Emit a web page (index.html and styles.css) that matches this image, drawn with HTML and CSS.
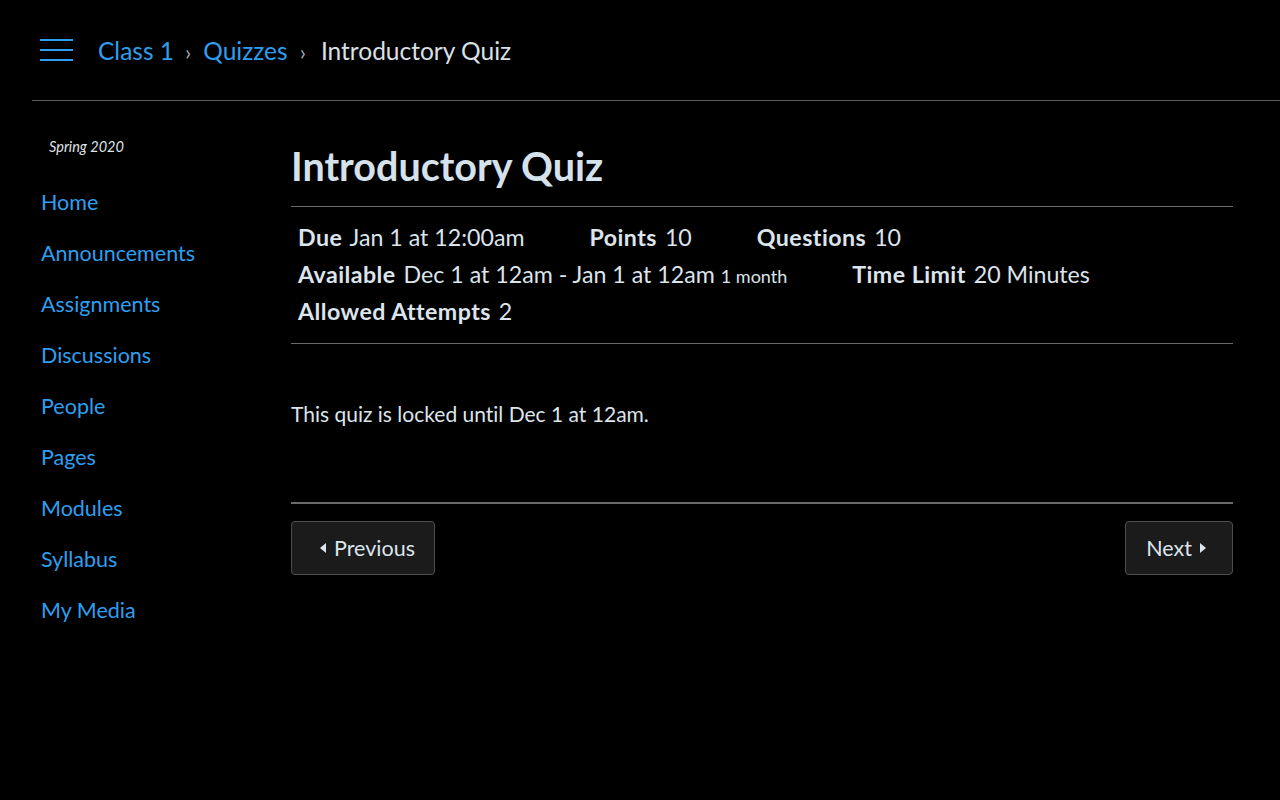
FILE: index.html
```html
<!DOCTYPE html>
<html lang="en">
<head>
<meta charset="utf-8">
<title>Introductory Quiz</title>
<link rel="stylesheet" href="styles.css">
</head>
<body>
<header class="topbar">
  <button class="hamburger" aria-label="Menu">
    <span></span><span></span><span></span>
  </button>
  <nav class="crumbs">
    <a href="#">Class 1</a>
    <span class="sep">&rsaquo;</span>
    <a href="#">Quizzes</a>
    <span class="sep sep-last">&rsaquo;</span>
    <span class="current">Introductory Quiz</span>
  </nav>
</header>
<div class="layout">
  <aside class="sidebar">
    <div class="term">Spring 2020</div>
    <ul class="nav">
      <li><a href="#">Home</a></li>
      <li><a href="#">Announcements</a></li>
      <li><a href="#">Assignments</a></li>
      <li><a href="#">Discussions</a></li>
      <li><a href="#">People</a></li>
      <li><a href="#">Pages</a></li>
      <li><a href="#">Modules</a></li>
      <li><a href="#">Syllabus</a></li>
      <li><a href="#">My Media</a></li>
    </ul>
  </aside>
  <main class="content">
    <h1 class="title">Introductory Quiz</h1>
    <div class="details">
      <div class="row">
        <div class="item"><b>Due</b> Jan 1 at 12:00am</div>
        <div class="item"><b>Points</b> 10</div>
        <div class="item"><b>Questions</b> 10</div>
      </div>
      <div class="row">
        <div class="item"><b>Available</b> Dec 1 at 12am - Jan 1 at 12am <small>1 month</small></div>
        <div class="item"><b>Time Limit</b> 20 Minutes</div>
      </div>
      <div class="row">
        <div class="item"><b>Allowed Attempts</b> 2</div>
      </div>
    </div>
    <p class="locked">This quiz is locked until Dec 1 at 12am.</p>
    <div class="pager">
      <a class="btn prev" href="#"><span class="tri left"></span>Previous</a>
      <a class="btn next" href="#">Next<span class="tri right"></span></a>
    </div>
  </main>
</div>
</body>
</html>
```
FILE: styles.css
```css
html, body {
  margin: 0;
  padding: 0;
  background: #000;
}
body {
  font-family: Lato, "Noto Sans", sans-serif;
  font-variant-ligatures: none;
  color: #dce4ec;
}
a { color: #2d9ff0; text-decoration: none; }

.topbar {
  display: flex;
  align-items: center;
  height: 101px;
  margin-left: 32px;
  border-bottom: 1px solid #5a5a5a;
  box-sizing: border-box;
}
.hamburger {
  display: flex;
  flex-direction: column;
  justify-content: space-between;
  width: 33px;
  height: 22px;
  padding: 0;
  margin: 0 25px 0 8px;
  background: none;
  border: none;
}
.hamburger span {
  display: block;
  height: 2px;
  background: #2d9ff0;
}
.crumbs {
  display: flex;
  align-items: baseline;
  font-size: 24.5px;
}
.crumbs .sep {
  color: #9aa3ab;
  font-size: 22px;
  margin: 0 12px 0 11px;
}
.crumbs .sep-last { margin: 0 15px 0 12px; }
.crumbs .current { color: #d9e0e6; }

.layout {
  display: flex;
}
.sidebar {
  width: 291px;
  flex-shrink: 0;
  box-sizing: border-box;
  padding: 37px 0 0 41px;
}
.term {
  font-style: italic;
  font-size: 14.5px;
  color: #dfe4e8;
  margin-left: 8px;
  margin-bottom: 34px;
}
.nav {
  list-style: none;
  margin: 0;
  padding: 0;
}
.nav li {
  font-size: 21.5px;
  height: 51px;
  line-height: 26px;
}

.content {
  width: 942px;
  padding-top: 37px;
}
.title {
  margin: 0;
  font-size: 39.5px;
  font-weight: 700;
  color: #d5e1eb;
  line-height: 56px;
  padding-bottom: 12px;
  border-bottom: 1px solid #6a6a6a;
}
.details {
  padding: 12px 0 13px 7px;
  border-bottom: 1px solid #6a6a6a;
  font-size: 23.2px;
}
.row {
  display: flex;
  align-items: baseline;
  height: 37px;
  line-height: 37px;
}
.item {
  margin-right: 65px;
  white-space: nowrap;
}
.item b {
  font-weight: 700;
  letter-spacing: 0.45px;
  margin-right: 2px;
}
.item small { font-size: 18px; line-height: 1; }

.locked {
  margin: 0;
  padding: 56px 0 74px;
  font-size: 21px;
  line-height: 28px;
  border-bottom: 2px solid #6a6a6a;
}
.pager {
  display: flex;
  justify-content: space-between;
  padding-top: 17px;
}
.btn {
  display: flex;
  align-items: center;
  height: 54px;
  box-sizing: border-box;
  padding: 0 20px;
  background: #1b1b1b;
  border: 1px solid #4d4d4d;
  border-radius: 4px;
  color: #dce4ec;
  font-size: 21.5px;
}
.btn.prev { padding: 0 19px 0 20px; }
.btn.next { padding: 0 26px 0 20px; }
.tri {
  width: 0;
  height: 0;
  border-top: 5px solid transparent;
  border-bottom: 5px solid transparent;
}
.tri.left {
  border-right: 6px solid #dce4ec;
  margin: 0 8px 0 8px;
}
.tri.right {
  border-left: 6px solid #dce4ec;
  margin: 0 0 0 8px;
}
```
